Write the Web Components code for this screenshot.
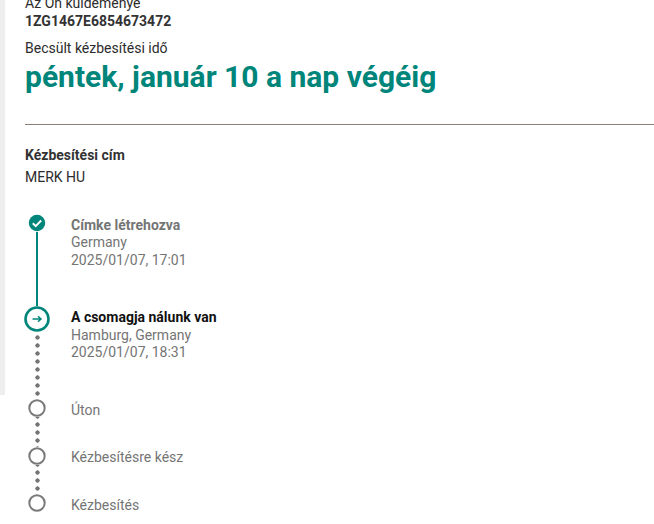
<!DOCTYPE html>
<html lang="hu"><head><meta charset="utf-8">
<style>
html,body{margin:0;padding:0;background:#fff;overflow:hidden;height:524px}
body{font-family:Roboto,"Liberation Sans",sans-serif}
</style></head><body>
<track-page>
  <track-summary slot="summary" tracking="1ZG1467E6854673472" date="péntek, január 10 a nap végéig"></track-summary>
  <track-address slot="address" name="MERK HU"></track-address>
  <track-step state="done" title="Címke létrehozva" h="92" pad="2"><span>Germany</span><span>2025/01/07, 17:01</span></track-step>
  <track-step state="current" title="A csomagja nálunk van" h="93" pad="2"><span>Hamburg, Germany</span><span>2025/01/07, 18:31</span></track-step>
  <track-step state="todo" title="Úton" h="48" pad="2"></track-step>
  <track-step state="todo" title="Kézbesítésre kész" h="47" pad="1"></track-step>
  <track-step state="last" title="Kézbesítés" h="29" pad="2"></track-step>
</track-page>
<script>
class TrackPage extends HTMLElement{constructor(){super();this.attachShadow({mode:'open'}).innerHTML=`
<style>
:host{display:flex;width:654px;height:524px;overflow:hidden;align-items:flex-start}
.strip{flex:none;width:5px;height:395px;background:#eeeeee}
main{flex:none;width:629px;margin-left:20px;margin-top:-5px}
.steps{display:flex;flex-direction:column;margin-top:27px}
</style>
<div class="strip"></div>
<main><slot name="summary"></slot><slot name="address"></slot><div class="steps"><slot></slot></div></main>`}}
customElements.define('track-page',TrackPage);

class TrackSummary extends HTMLElement{constructor(){super();const r=this.attachShadow({mode:'open'});r.innerHTML=`
<style>
:host{display:block;color:#333}
.l{font-size:14px;line-height:16px;height:16px;color:#2c2c2c}
.n{font-size:14px;line-height:20px;font-weight:700;color:#333}
.e{font-size:14px;line-height:18px;margin-top:8px;color:#2c2c2c}
h1{margin:2px 0 0;font-size:30px;line-height:36px;font-weight:700;color:#00857a}
hr{border:0;height:1px;background:#8c7f78;margin:29px 0 0}
</style>
<div class="l">Az Ön küldeménye</div>
<div class="n"></div>
<div class="e">Becsült kézbesítési idő</div>
<h1></h1><hr>`;
r.querySelector('.n').textContent=this.getAttribute('tracking');r.querySelector('h1').textContent=this.getAttribute('date')}}
customElements.define('track-summary',TrackSummary);

class TrackAddress extends HTMLElement{constructor(){super();const r=this.attachShadow({mode:'open'});r.innerHTML=`
<style>
:host{display:block;margin-top:20px;font-size:14px;line-height:20px;color:#2c2c2c}
b{display:block;font-weight:700;color:#333}
div{margin-top:2px}
</style><b>Kézbesítési cím</b><div></div>`;
r.querySelector('div').textContent=this.getAttribute('name')}}
customElements.define('track-address',TrackAddress);

class TrackStep extends HTMLElement{constructor(){super();const s=this.getAttribute('state'),h=+this.getAttribute('h'),pad=+this.getAttribute('pad');const r=this.attachShadow({mode:'open'});
const icons={
done:`<svg class="i" width="18" height="18" viewBox="0 0 18 18"><circle cx="9" cy="9" r="8.2" fill="#00857a"/><path d="M4.8 9.2l2.9 2.9 5.5-5.6" fill="none" stroke="#fff" stroke-width="2"/></svg>`,
current:`<svg class="i" width="26" height="26" viewBox="0 0 26 26"><circle cx="13" cy="13" r="11.5" fill="#fff" stroke="#00857a" stroke-width="2.6"/><path d="M8.5 13h8.5M14 10.2l3 2.8-3 2.8" fill="none" stroke="#00857a" stroke-width="1.5"/></svg>`,
todo:`<svg class="i" width="18" height="18" viewBox="0 0 18 18"><circle cx="9" cy="9" r="7.7" fill="#fff" stroke="#7a7a7a" stroke-width="2"/></svg>`};
icons.last=icons.todo;
const conn={done:'<div class="line"></div>',current:'<div class="dots" style="background-position:0 3px"></div>',todo:'<div class="dots" style="background-position:0 -3px"></div>',last:''}[s];
r.innerHTML=`
<style>
:host{display:block}
.row{display:grid;grid-template-columns:24px 1fr;column-gap:22px;height:${h}px}
.rail{display:flex;flex-direction:column;align-items:center;width:24px}
.i{flex:none;display:block}
.line{flex:1;width:2px;background:#00857a}
.dots{flex:1;width:5px;background-image:radial-gradient(circle at 2.5px 2.5px,#757575 1.9px,transparent 2.4px);background-size:5px 8px;background-repeat:repeat-y}
.t{font-size:14px;line-height:18px;color:${s==='current'?'#111':'#757575'};font-weight:${s==='done'||s==='current'?700:400};padding-top:${pad}px}
.s{display:flex;flex-direction:column;font-size:14px;line-height:${s==='current'?17:18}px;color:#757575;margin-top:${s==='done'?-1:s==='current'?1:0}px}
::slotted(span){display:block}
</style>
<div class="row"><div class="rail">${icons[s]}${conn}</div><div><div class="t"></div><div class="s"><slot></slot></div></div></div>`;
r.querySelector('.t').textContent=this.getAttribute('title')}}
customElements.define('track-step',TrackStep);
</script>
</body></html>
